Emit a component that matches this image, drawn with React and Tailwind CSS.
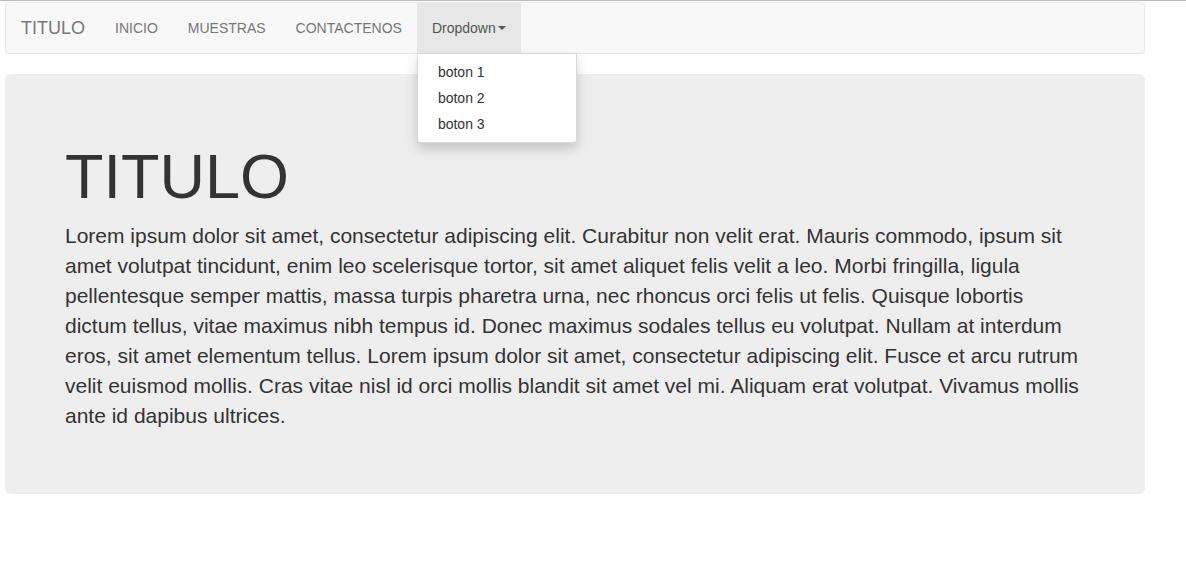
export default function App() {
  const links = ['INICIO', 'MUESTRAS', 'CONTACTENOS'];
  const items = ['boton 1', 'boton 2', 'boton 3'];

  return (
    <div className="min-h-[580px] bg-white border-t border-[#b9b9b9] font-['Liberation_Sans',Arial,sans-serif] text-[#333] text-[14px] leading-[20px]">
      <div className="w-[1140px] ml-[5px] pt-[1px]">
        {/* Navbar */}
        <nav className="relative flex h-[52px] border border-[#e7e7e7] bg-[#f8f8f8] rounded-[4px] mb-[20px]">
          <a className="px-[15px] py-[15px] h-[50px] text-[18px] leading-[20px] text-[#777]">TITULO</a>
          {links.map((l) => (
            <a key={l} className="px-[15px] py-[15px] h-[50px] text-[#777]">
              {l}
            </a>
          ))}
          <div className="relative">
            <a className="flex items-center px-[15px] py-[15px] h-[50px] bg-[#e7e7e7] text-[#555]">
              Dropdown
              <span className="ml-[2px] w-0 h-0 border-t-[4px] border-t-[#555] border-x-[4px] border-x-transparent" />
            </a>
            {/* Dropdown menu */}
            <ul className="absolute top-full left-0 z-10 min-w-[160px] py-[5px] bg-white border border-black/15 rounded-b-[4px] shadow-[0_6px_12px_rgba(0,0,0,0.175)]">
              {items.map((i) => (
                <li key={i} className="px-[20px] py-[3px] text-[#333] whitespace-nowrap">
                  {i}
                </li>
              ))}
            </ul>
          </div>
        </nav>

        {/* Jumbotron */}
        <div className="bg-[#eee] rounded-[6px] px-[60px] py-[48px]">
          <h1 className="mt-[20px] mb-[10px] text-[63px] leading-[1.1] text-[#333]">TITULO</h1>
          <p className="mb-[15px] text-[21px] leading-[30px] text-[#333]">
            Lorem ipsum dolor sit amet, consectetur adipiscing elit. Curabitur non velit erat. Mauris commodo, ipsum sit amet volutpat tincidunt, enim leo scelerisque tortor, sit amet aliquet felis velit a leo. Morbi fringilla, ligula pellentesque semper mattis, massa turpis pharetra urna, nec rhoncus orci felis ut felis. Quisque lobortis dictum tellus, vitae maximus nibh tempus id. Donec maximus sodales tellus eu volutpat. Nullam at interdum eros, sit amet elementum tellus. Lorem ipsum dolor sit amet, consectetur adipiscing elit. Fusce et arcu rutrum velit euismod mollis. Cras vitae nisl id orci mollis blandit sit amet vel mi. Aliquam erat volutpat. Vivamus mollis ante id dapibus ultrices.
          </p>
        </div>
      </div>
    </div>
  );
}
